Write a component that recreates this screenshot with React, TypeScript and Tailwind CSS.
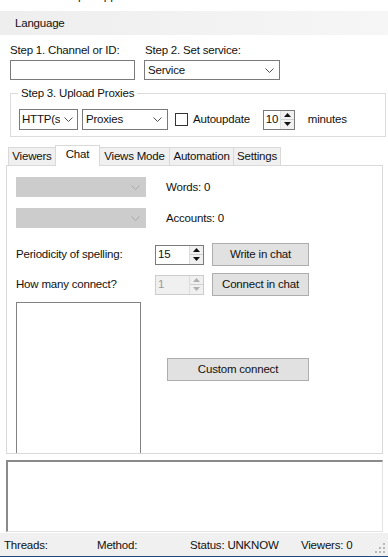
import React from "react";

const Chevron = ({ color = "#505050" }: { color?: string }) => (
  <svg width="9" height="5" viewBox="0 0 9 5" className="shrink-0">
    <polyline points="0.5,0.5 4.5,4.5 8.5,0.5" fill="none" stroke={color} strokeWidth="1" />
  </svg>
);

const Spin = ({ disabled }: { disabled?: boolean }) => (
  <div className="flex flex-col w-[14px] h-full border-l border-[#dddddd]">
    <div className="flex-1 flex items-center justify-center bg-[#f0f0f0] border-b border-[#cfcfcf]">
      <svg width="7" height="4" viewBox="0 0 7 4">
        <polygon points="0,4 3.5,0 7,4" fill={disabled ? "#b0b0b0" : "#111"} />
      </svg>
    </div>
    <div className="flex-1 flex items-center justify-center bg-[#f0f0f0]">
      <svg width="7" height="4" viewBox="0 0 7 4">
        <polygon points="0,0 3.5,4 7,0" fill={disabled ? "#b0b0b0" : "#111"} />
      </svg>
    </div>
  </div>
);

export default function App() {
  return (
    <div className="w-[388px] h-[557px] overflow-hidden bg-white text-[11.5px] leading-[15px] tracking-[-0.2px] text-[#111] flex flex-col [font-family:'Liberation_Sans',Arial,sans-serif]">
      {/* cut-off title */}
      <div className="h-[11px] overflow-hidden bg-white relative shrink-0">
        <div className="pl-[58px] -mt-[12px] text-[12px] leading-[15px] text-[#222]">Simple App</div>
      </div>
      {/* menu */}
      <div className="h-[24px] shrink-0 bg-gradient-to-r from-[#eeeeee] to-[#f6f6f6] flex items-center pl-[15px]">
        Language
      </div>

      {/* steps */}
      <div className="mt-[8px] flex shrink-0">
        <div className="ml-[10px] w-[135px]">Step 1. Channel or ID:</div>
        <div>Step 2. Set service:</div>
      </div>
      <div className="mt-[2px] flex shrink-0">
        <div className="ml-[10px] w-[125px] h-[20px] border border-[#7a7a7a] bg-white" />
        <div className="ml-[9px] w-[136px] h-[20px] border border-[#7a7a7a] bg-white flex items-center pl-[3px] pr-[5px] justify-between">
          <span>Service</span>
          <Chevron />
        </div>
      </div>

      {/* group box */}
      <div className="mt-[13px] ml-[10px] w-[376px] border border-[#dcdcdc] relative pt-[15px] pb-[6px] shrink-0">
        <span className="absolute -top-[8px] left-[7px] bg-white px-[3px]">Step 3. Upload Proxies</span>
        <div className="flex items-center">
          <div className="ml-[8px] w-[59px] h-[21px] border border-[#7a7a7a] flex items-center pl-[2px] pr-[4px] justify-between overflow-hidden">
            <span className="whitespace-nowrap overflow-hidden w-[38px]">HTTP(s)</span>
            <Chevron />
          </div>
          <div className="ml-[4px] w-[86px] h-[21px] border border-[#7a7a7a] flex items-center pl-[3px] pr-[5px] justify-between">
            <span>Proxies</span>
            <Chevron />
          </div>
          <div className="ml-[7px] w-[13px] h-[13px] border border-[#333333] bg-white" />
          <span className="ml-[5px]">Autoupdate</span>
          <div className="ml-[13px] w-[32px] h-[20px] border border-[#7a7a7a] flex items-stretch">
            <span className="flex-1 pl-[2px] flex items-center">10</span>
            <Spin />
          </div>
          <span className="ml-[13px]">minutes</span>
        </div>
      </div>

      {/* tabs */}
      <div className="mt-[8px] ml-[8px] flex items-end h-[20px] shrink-0 relative z-10">
        <div className="w-[47px] h-[18px] border-t border-l border-[#d9d9d9] bg-[#f0f0f0] flex items-center justify-center">Viewers</div>
        <div className="w-[45px] h-[21px] -mb-[1px] border-t border-l border-r border-[#d9d9d9] bg-white flex items-start justify-center pt-[1px]">Chat</div>
        <div className="w-[70px] h-[18px] border-t border-r border-[#d9d9d9] bg-[#f0f0f0] flex items-center justify-center">Views Mode</div>
        <div className="w-[64px] h-[18px] border-t border-r border-[#d9d9d9] bg-[#f0f0f0] flex items-center justify-center">Automation</div>
        <div className="w-[47px] h-[18px] border-t border-r border-[#d9d9d9] bg-[#f0f0f0] flex items-center justify-center">Settings</div>
      </div>

      {/* tab panel */}
      <div className="ml-[6px] w-[377px] h-[289px] border border-[#d9d9d9] bg-white overflow-hidden shrink-0 flex flex-col">
        <div className="mt-[11px] flex items-center">
          <div className="ml-[9px] w-[130px] h-[20px] bg-[#cccccc] flex items-center justify-end pr-[6px]">
            <Chevron color="#a8a8a8" />
          </div>
          <span className="ml-[20px]">Words: 0</span>
        </div>
        <div className="mt-[11px] flex items-center">
          <div className="ml-[9px] w-[130px] h-[20px] bg-[#cccccc] flex items-center justify-end pr-[6px]">
            <Chevron color="#a8a8a8" />
          </div>
          <span className="ml-[20px]">Accounts: 0</span>
        </div>
        <div className="mt-[15px] flex items-center h-[23px]">
          <span className="ml-[9px] w-[139px]">Periodicity of spelling:</span>
          <div className="w-[49px] h-[20px] border border-[#7a7a7a] flex items-stretch">
            <span className="flex-1 pl-[2px] flex items-center">15</span>
            <Spin />
          </div>
          <div className="ml-[8px] w-[97px] h-[23px] border border-[#adadad] bg-[#e1e1e1] flex items-center justify-center">Write in chat</div>
        </div>
        <div className="mt-[7px] flex items-center h-[23px]">
          <span className="ml-[9px] w-[139px]">How many connect?</span>
          <div className="w-[49px] h-[20px] border border-[#cccccc] bg-[#f0f0f0] flex items-stretch text-[#9a9a9a]">
            <span className="flex-1 pl-[2px] flex items-center">1</span>
            <Spin disabled />
          </div>
          <div className="ml-[8px] w-[97px] h-[23px] border border-[#adadad] bg-[#e1e1e1] flex items-center justify-center">Connect in chat</div>
        </div>
        <div className="mt-[6px] flex items-start">
          <div className="ml-[9px] w-[125px] h-[170px] border border-[#828282] bg-white shrink-0" />
          <div className="ml-[26px] mt-[56px] w-[142px] h-[23px] border border-[#adadad] bg-[#e1e1e1] flex items-center justify-center">Custom connect</div>
        </div>
      </div>

      {/* log box */}
      <div className="mt-[6px] ml-[6px] w-[377px] h-[72px] border-t-2 border-l-2 border-[#8a8a8a] border-r border-b border-r-[#e3e3e3] border-b-[#e3e3e3] bg-white shrink-0" />

      {/* status bar */}
      <div className="mt-[1px] h-[23px] bg-[#f0f0f0] flex items-center relative shrink-0 pt-[2px]">
        <span className="absolute left-[4px]">Threads:</span>
        <span className="absolute left-[97px]">Method:</span>
        <span className="absolute left-[190px]">Status: UNKNOW</span>
        <span className="absolute left-[301px]">Viewers: 0</span>
        <svg className="absolute right-[2px] bottom-[2px]" width="11" height="11" viewBox="0 0 11 11">
          {[
            [8, 0], [8, 4], [4, 4], [8, 8], [4, 8], [0, 8],
          ].map(([x, y], i) => (
            <rect key={i} x={x} y={y} width="2" height="2" fill="#b8b8b8" />
          ))}
        </svg>
      </div>
      <div className="h-[3px] bg-[#22477a] shrink-0" />
    </div>
  );
}
